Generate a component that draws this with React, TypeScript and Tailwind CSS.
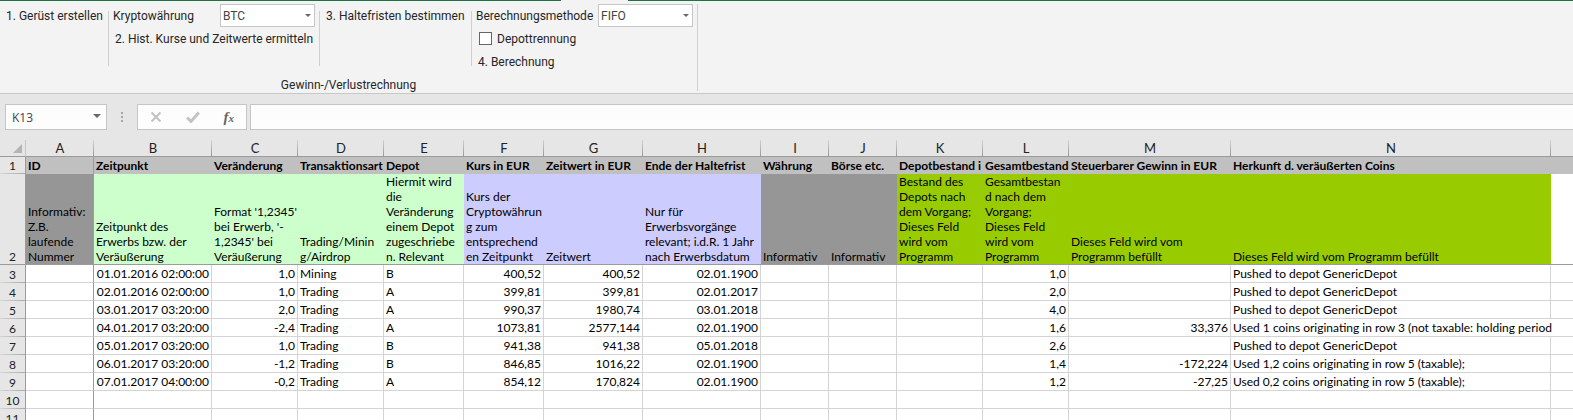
import { useState } from 'react';
import type { ReactNode } from 'react';
import clsx from 'clsx';

type Column = {
  letter: string;
  width: string;
  title: string;
  // one entry per visible line of the description row
  hint: string[];
  fill: string;
  align?: 'right';
};

const GREY = 'bg-[#969696] border-[#969696]';
const MINT = 'bg-[#ccffcc] border-[#ccffcc]';
const LILAC = 'bg-[#ccccff] border-[#ccccff]';
const LIME = 'bg-[#99cc00] border-[#99cc00]';

const COLUMNS: Column[] = [
  { letter: 'A', width: 'w-[68px]', title: 'ID', hint: ['Informativ:', 'Z.B.', 'laufende', 'Nummer'], fill: GREY },
  { letter: 'B', width: 'w-[118px]', title: 'Zeitpunkt', hint: ['Zeitpunkt des', 'Erwerbs bzw. der', 'Veräußerung'], fill: MINT, align: 'right' },
  { letter: 'C', width: 'w-[86px]', title: 'Veränderung', hint: ["Format '1,2345'", "bei Erwerb, '-", "1,2345' bei", 'Veräußerung'], fill: MINT, align: 'right' },
  { letter: 'D', width: 'w-[86px]', title: 'Transaktionsart', hint: ['Trading/Minin', 'g/Airdrop'], fill: MINT },
  { letter: 'E', width: 'w-[80px]', title: 'Depot', hint: ['Hiermit wird', 'die', 'Veränderung', 'einem Depot', 'zugeschriebe', 'n. Relevant'], fill: MINT },
  { letter: 'F', width: 'w-[80px]', title: 'Kurs in EUR', hint: ['Kurs der', 'Cryptowährun', 'g zum', 'entsprechend', 'en Zeitpunkt'], fill: LILAC, align: 'right' },
  { letter: 'G', width: 'w-[99px]', title: 'Zeitwert in EUR', hint: ['Zeitwert'], fill: LILAC, align: 'right' },
  { letter: 'H', width: 'w-[118px]', title: 'Ende der Haltefrist', hint: ['Nur für', 'Erwerbsvorgänge', 'relevant; i.d.R. 1 Jahr', 'nach Erwerbsdatum'], fill: LILAC, align: 'right' },
  { letter: 'I', width: 'w-[68px]', title: 'Währung', hint: ['Informativ'], fill: GREY },
  { letter: 'J', width: 'w-[68px]', title: 'Börse etc.', hint: ['Informativ'], fill: GREY },
  { letter: 'K', width: 'w-[86px]', title: 'Depotbestand i', hint: ['Bestand des', 'Depots nach', 'dem Vorgang;', 'Dieses Feld', 'wird vom', 'Programm'], fill: LIME, align: 'right' },
  { letter: 'L', width: 'w-[86px]', title: 'Gesamtbestand', hint: ['Gesamtbestan', 'd nach dem', 'Vorgang;', 'Dieses Feld', 'wird vom', 'Programm'], fill: LIME, align: 'right' },
  { letter: 'M', width: 'w-[162px]', title: 'Steuerbarer Gewinn in EUR', hint: ['Dieses Feld wird vom', 'Programm befüllt'], fill: LIME, align: 'right' },
  { letter: 'N', width: 'w-[320px]', title: 'Herkunft d. veräußerten Coins', hint: ['Dieses Feld wird vom Programm befüllt'], fill: LIME },
];

const PUSHED = 'Pushed to depot GenericDepot';

const ROWS: string[][] = [
  ['', '01.01.2016 02:00:00', '1,0', 'Mining', 'B', '400,52', '400,52', '02.01.1900', '', '', '', '1,0', '', PUSHED],
  ['', '02.01.2016 02:00:00', '1,0', 'Trading', 'A', '399,81', '399,81', '02.01.2017', '', '', '', '2,0', '', PUSHED],
  ['', '03.01.2017 03:20:00', '2,0', 'Trading', 'A', '990,37', '1980,74', '03.01.2018', '', '', '', '4,0', '', PUSHED],
  ['', '04.01.2017 03:20:00', '-2,4', 'Trading', 'A', '1073,81', '2577,144', '02.01.1900', '', '', '', '1,6', '33,376', 'Used 1 coins originating in row 3 (not taxable: holding period'],
  ['', '05.01.2017 03:20:00', '1,0', 'Trading', 'B', '941,38', '941,38', '05.01.2018', '', '', '', '2,6', '', PUSHED],
  ['', '06.01.2017 03:20:00', '-1,2', 'Trading', 'B', '846,85', '1016,22', '02.01.1900', '', '', '', '1,4', '-172,224', 'Used 1,2 coins originating in row 5 (taxable);'],
  ['', '07.01.2017 04:00:00', '-0,2', 'Trading', 'A', '854,12', '170,824', '02.01.1900', '', '', '', '1,2', '-27,25', 'Used 0,2 coins originating in row 5 (taxable);'],
  [],
  [],
];

const Arrow = ({ className }: { className: string }) => (
  <svg viewBox="0 0 8 4" className={clsx('pointer-events-none absolute fill-[#666666]', className)} aria-hidden="true">
    <path d="M0 0h8L4 4z" />
  </svg>
);

const RibbonButton = ({ children }: { children: ReactNode }) => (
  <button type="button" className="h-[23px] whitespace-nowrap text-left hover:bg-[#d5d5d5]">
    {children}
  </button>
);

const RibbonSelect = ({ id, options }: { id: string; options: string[] }) => (
  <div className="relative">
    <select
      id={id}
      className="block h-[23px] w-[95px] appearance-none border border-[#c6c6c6] bg-white pl-[2px] text-[#444444] outline-none"
    >
      {options.map((option) => (
        <option key={option}>{option}</option>
      ))}
    </select>
    <Arrow className="right-1 top-[10px] h-[3px] w-[6px]" />
  </div>
);

const Divider = () => <div className="mt-[7px] h-[55px] w-px shrink-0 bg-[#d0d0d0]" />;

const Ribbon = () => {
  const [split, setSplit] = useState(false);

  return (
    <header className="border-b border-[#c8c8c8] bg-[#f3f3f3] font-['Roboto','Open_Sans',sans-serif] text-[12px] text-[#262626]">
      {/* green strip, interrupted by the active tab */}
      <div className="flex h-px">
        <div className="w-[561px] bg-[#217346]" />
        <div className="w-[67px]" />
        <div className="flex-1 bg-[#217346]" />
      </div>
      <section className="mt-[3px] mb-[2px] flex h-[87px] w-[698px] flex-col justify-between border-r border-[#d0d0d0]">
        <div className="flex">
          <div className="w-[108px] shrink-0 pl-[6px]">
            <RibbonButton>1. Gerüst erstellen</RibbonButton>
          </div>
          <Divider />
          <div className="w-[210px] shrink-0 pl-1 pr-[4px]">
            <div className="flex items-center justify-between">
              <label htmlFor="currency">Kryptowährung</label>
              <RibbonSelect id="currency" options={['BTC', 'ETH', 'LTC']} />
            </div>
            <div className="pl-[2px]">
              <RibbonButton>2. Hist. Kurse und Zeitwerte ermitteln</RibbonButton>
            </div>
          </div>
          <Divider />
          <div className="w-[151px] shrink-0 pl-[6px]">
            <RibbonButton>3. Haltefristen bestimmen</RibbonButton>
          </div>
          <Divider />
          <div className="flex-1 pl-1 pr-[4px]">
            <div className="flex items-center justify-between">
              <label htmlFor="method">Berechnungsmethode</label>
              <RibbonSelect id="method" options={['FIFO', 'LIFO']} />
            </div>
            <label className="flex h-[23px] items-center gap-[5px] pl-[3px]">
              <input
                type="checkbox"
                checked={split}
                onChange={(e) => setSplit(e.target.checked)}
                className="h-[13px] w-[13px] appearance-none border border-[#666666] bg-white checked:bg-[#217346]"
              />
              Depottrennung
            </label>
            <div className="pl-[2px]">
              <RibbonButton>4. Berechnung</RibbonButton>
            </div>
          </div>
        </div>
        <h2 className="text-center leading-[11px]">Gewinn-/Verlustrechnung</h2>
      </section>
    </header>
  );
};

const FormulaBar = () => (
  <div className="flex py-[10px] pl-[5px]">
    <div className="relative">
      <input
        aria-label="Namenfeld"
        defaultValue="K13"
        className="block h-[26px] w-[102px] border border-[#c6c6c6] bg-[#fdfdfd] pl-[6px] font-['Open_Sans',sans-serif] text-[12px] text-[#444444] outline-none"
      />
      <Arrow className="right-[6px] top-[10px] h-[4px] w-[8px]" />
    </div>
    <div className="flex w-[30px] flex-col items-center justify-center gap-[2px]">
      <span className="h-[2px] w-[2px] bg-[#a6a6a6]" />
      <span className="h-[2px] w-[2px] bg-[#a6a6a6]" />
      <span className="h-[2px] w-[2px] bg-[#a6a6a6]" />
    </div>
    <div className="flex h-[26px] w-[110px] items-center justify-around border border-[#c6c6c6] bg-[#fdfdfd]">
      <button type="button" aria-label="Abbrechen">
        <svg viewBox="0 0 12 12" className="h-3 w-3 fill-none stroke-[#c3c3c3] stroke-2">
          <path d="M1.5 1.5l9 9M10.5 1.5l-9 9" />
        </svg>
      </button>
      <button type="button" aria-label="Eingeben">
        <svg viewBox="0 0 14 12" className="h-3 w-[14px] fill-none stroke-[#c3c3c3] stroke-3">
          <path d="M1 6.5l4 4L12.8 1.5" />
        </svg>
      </button>
      <button
        type="button"
        aria-label="Funktion einfügen"
        className="font-['Liberation_Serif',serif] text-[15px] font-bold italic leading-4 text-[#666666]"
      >
        f<span className="text-[11px]">x</span>
      </button>
    </div>
    <input
      aria-label="Bearbeitungsleiste"
      className="ml-[3px] h-[26px] flex-1 border border-r-0 border-[#c6c6c6] bg-[#fdfdfd] px-2 text-[13px] outline-none"
    />
  </div>
);

const RowHeader = ({ n, frozen }: { n: number; frozen?: boolean }) => (
  <th
    scope="row"
    className={clsx(
      'border-r border-r-[#9b9b9b] bg-[#e6e6e6] text-center font-normal text-[#222222]',
      frozen
        ? 'border-b border-b-[#9b9b9b] align-bottom'
        : 'bg-[linear-gradient(to_right,#d4d4d4,#ababab)] bg-[length:100%_1px] bg-bottom bg-no-repeat'
    )}
  >
    {n}
  </th>
);

const Sheet = () => (
  <table className="w-full min-w-[1573px] table-fixed border-separate border-spacing-0 bg-white font-['Lato','Noto_Sans',sans-serif] text-[12px] leading-[15px] text-black">
    <colgroup>
      <col className="w-[26px]" />
      {COLUMNS.map((c) => (
        <col key={c.letter} className={c.width} />
      ))}
      <col />
    </colgroup>
    <thead>
      <tr className="h-[17px] bg-[#e6e6e6] text-[13px] text-[#222222]">
        <td className="border-r border-b border-r-[#c6c6c6] border-b-[#9b9b9b]">
          <svg viewBox="0 0 9 9" className="ml-auto mr-[3px] h-[9px] w-[9px] fill-[#b4b4b4]" aria-hidden="true">
            <path d="M9 0v9H0z" />
          </svg>
        </td>
        {COLUMNS.map((c) => (
          <th
            key={c.letter}
            scope="col"
            className="border-b border-[#9b9b9b] bg-[linear-gradient(to_bottom,#d2d2d2,#999999)] bg-[length:1px_100%] bg-right bg-no-repeat font-normal"
          >
            {c.letter}
          </th>
        ))}
        <th className="border-b border-[#9b9b9b]" />
      </tr>
    </thead>
    <tbody>
      {/* column titles */}
      <tr className="h-[17px]">
        <RowHeader n={1} />
        {COLUMNS.map((c, i) => (
          <td
            key={c.letter}
            className={clsx(
              'overflow-hidden whitespace-nowrap bg-[#c0c0c0] pl-[2px] font-bold',
              i === 0 && 'border-r border-[#9b9b9b]'
            )}
          >
            {c.title}
          </td>
        ))}
        <td className="bg-[#c0c0c0]" />
      </tr>
      {/* descriptions, last line of the frozen area */}
      <tr className="h-[91px]">
        <RowHeader n={2} frozen />
        {COLUMNS.map((c, i) => (
          <td
            key={c.letter}
            className={clsx(
              'whitespace-pre border-b border-b-[#9b9b9b] pl-[2px] align-bottom leading-[15px]',
              c.fill,
              i === 0 && 'border-r border-r-[#9b9b9b]'
            )}
          >
            {c.hint.join('\n')}
          </td>
        ))}
        <td className="border-b border-[#9b9b9b]" />
      </tr>
      {ROWS.map((row, r) => (
        <tr key={r} className="h-[18px]">
          <RowHeader n={r + 3} />
          {COLUMNS.map((c, i) => (
            <td
              key={c.letter}
              className={clsx(
                'whitespace-nowrap border-b border-b-[#d4d4d4] pl-[2px] pr-[2px]',
                c.align === 'right' && 'text-right',
                i === 0 && 'border-r border-r-[#9b9b9b]',
                // long text runs over the grid line
                i > 0 && (row[i] ?? '').length < 50 && 'border-r border-r-[#d4d4d4]'
              )}
            >
              {row[i]}
            </td>
          ))}
          <td className="border-b border-[#d4d4d4]" />
        </tr>
      ))}
    </tbody>
  </table>
);

export default function App() {
  return (
    <div className="h-screen overflow-hidden bg-[#e6e6e6]">
      <Ribbon />
      <FormulaBar />
      <Sheet />
    </div>
  );
}
